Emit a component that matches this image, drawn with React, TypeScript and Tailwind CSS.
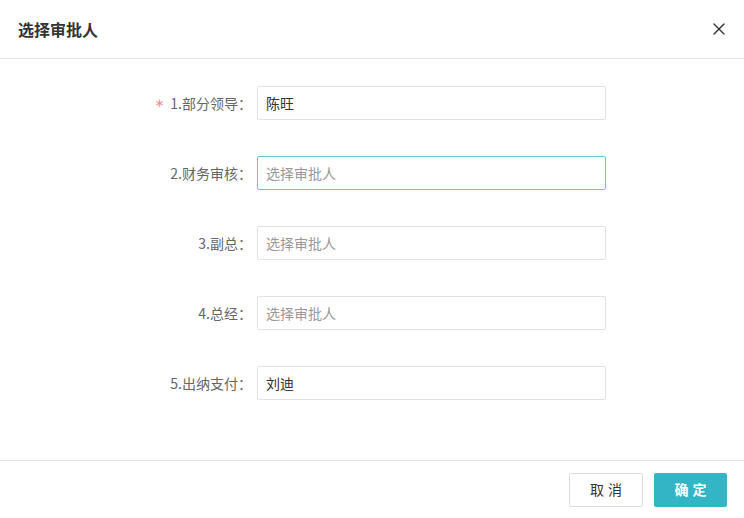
import { X } from 'lucide-react'

const ROWS = [
  { label: '1.部分领导：', value: '陈旺', required: true },
  { label: '2.财务审核：', value: '', focused: true },
  { label: '3.副总：', value: '' },
  { label: '4.总经：', value: '' },
  { label: '5.出纳支付：', value: '刘迪' },
]

export default function App() {
  return (
    <div
      className="w-[744px] h-[518px] bg-white flex flex-col overflow-hidden"
      style={{ fontFamily: '"Noto Sans CJK SC", "Noto Sans", sans-serif' }}
    >
      {/* Header */}
      <div className="h-[59px] flex items-center justify-between pl-[18px] pr-[15px] border-b border-[#e5e5e5] shrink-0">
        <h2 className="text-[16px] font-bold text-[#333]">选择审批人</h2>
        <X className="w-[20px] h-[20px] text-[#333]" strokeWidth={1.6} />
      </div>

      {/* Body */}
      <div className="flex-1 pt-[27px] flex flex-col gap-[36px]">
        {ROWS.map((row) => (
          <div key={row.label} className="flex items-center">
            <label className="w-[252px] flex items-center justify-end text-[14px] text-[#666]">
              {row.required && (
                <span className="text-[#f58a8a] mr-[6px] text-[12px]" style={{ fontFamily: '"DejaVu Sans", sans-serif' }}>∗</span>
              )}
              {row.label}
            </label>
            <input
              readOnly
              value={row.value}
              placeholder="选择审批人"
              className={`ml-[5px] w-[349px] h-[34px] px-[8px] text-[14px] text-[#333] placeholder:text-[#999] rounded-[2px] outline-none border ${
                row.focused ? 'border-[#66c6d6]' : 'border-[#e2e2e2]'
              }`}
            />
          </div>
        ))}
      </div>

      {/* Footer */}
      <div className="h-[58px] border-t border-[#e5e5e5] flex items-center justify-end gap-[11px] pr-[17px] shrink-0">
        <button className="w-[74px] h-[34px] rounded-[2px] border border-[#dcdcdc] bg-white text-[14px] text-[#333] tracking-[4px] pl-[4px]">
          取消
        </button>
        <button className="w-[73px] h-[34px] rounded-[2px] bg-[#33b5c5] text-[14px] font-bold text-white tracking-[4px] pl-[4px]">
          确定
        </button>
      </div>
    </div>
  )
}
